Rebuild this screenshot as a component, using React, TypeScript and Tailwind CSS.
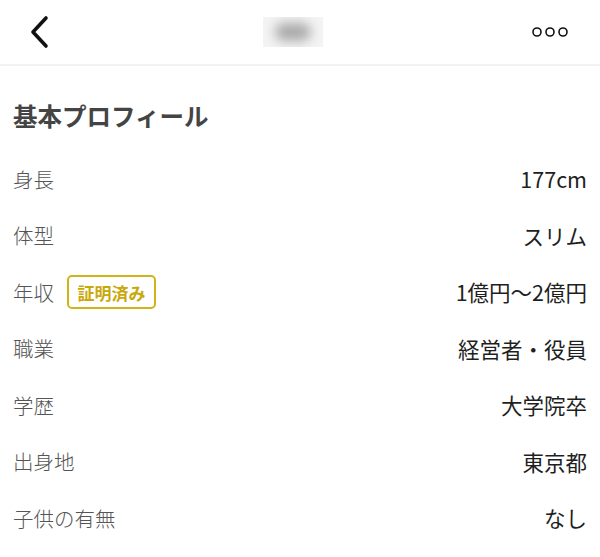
import React from 'react';

const font = { fontFamily: '"Noto Sans CJK JP", "Noto Sans", sans-serif' };

interface RowProps {
  label: string;
  value: string;
  verified?: boolean;
}

function ProfileRow({ label, value, verified = false }: RowProps) {
  return (
    <div className="flex h-[56.5px] items-center justify-between">
      <div className="flex items-center">
        <span className="text-[20.5px] font-light text-[#555555]">{label}</span>
        {verified && (
          <span className="ml-[13px] flex h-[34px] w-[89px] items-center justify-center rounded-[5px] border-2 border-[#d2b418] text-[17px] font-bold text-[#c9a80a]">
            証明済み
          </span>
        )}
      </div>
      <span className="text-[21.5px] text-[#1f1f1f]">{value}</span>
    </div>
  );
}

export default function App() {
  const rows: RowProps[] = [
    { label: '身長', value: '177cm' },
    { label: '体型', value: 'スリム' },
    { label: '年収', value: '1億円〜2億円', verified: true },
    { label: '職業', value: '経営者・役員' },
    { label: '学歴', value: '大学院卒' },
    { label: '出身地', value: '東京都' },
    { label: '子供の有無', value: 'なし' },
  ];

  return (
    <div className="h-[557px] w-[600px] overflow-hidden bg-white" style={font}>
      <div className="flex h-[66px] items-center justify-between border-b-2 border-[#f2f2f2] pl-[29px] pr-[32px]">
        <svg width="24" height="34" viewBox="0 0 24 34" fill="none">
          <path d="M17 3 L4 17 L17 31" stroke="#111" strokeWidth="3.6" strokeLinecap="round" strokeLinejoin="round" />
        </svg>
        <div className="relative h-[30px] w-[60px] overflow-hidden bg-[#f4f4f4]">
          <div className="absolute left-[12px] top-[6px] h-[18px] w-[36px] rounded-full bg-[#a8a8a8] blur-[6px]" />
        </div>
        <svg width="36" height="12" viewBox="0 0 36 12" fill="none">
          <circle cx="5" cy="6" r="4" stroke="#111" strokeWidth="1.6" />
          <circle cx="18" cy="6" r="4" stroke="#111" strokeWidth="1.6" />
          <circle cx="31" cy="6" r="4" stroke="#111" strokeWidth="1.6" />
        </svg>
      </div>
      <div className="px-[13px]">
        <h2 className="mt-[34px] mb-[19px] text-[24.5px] font-bold leading-[32px] text-[#444444]">基本プロフィール</h2>
        {rows.map((r) => (
          <ProfileRow key={r.label} {...r} />
        ))}
      </div>
    </div>
  );
}
